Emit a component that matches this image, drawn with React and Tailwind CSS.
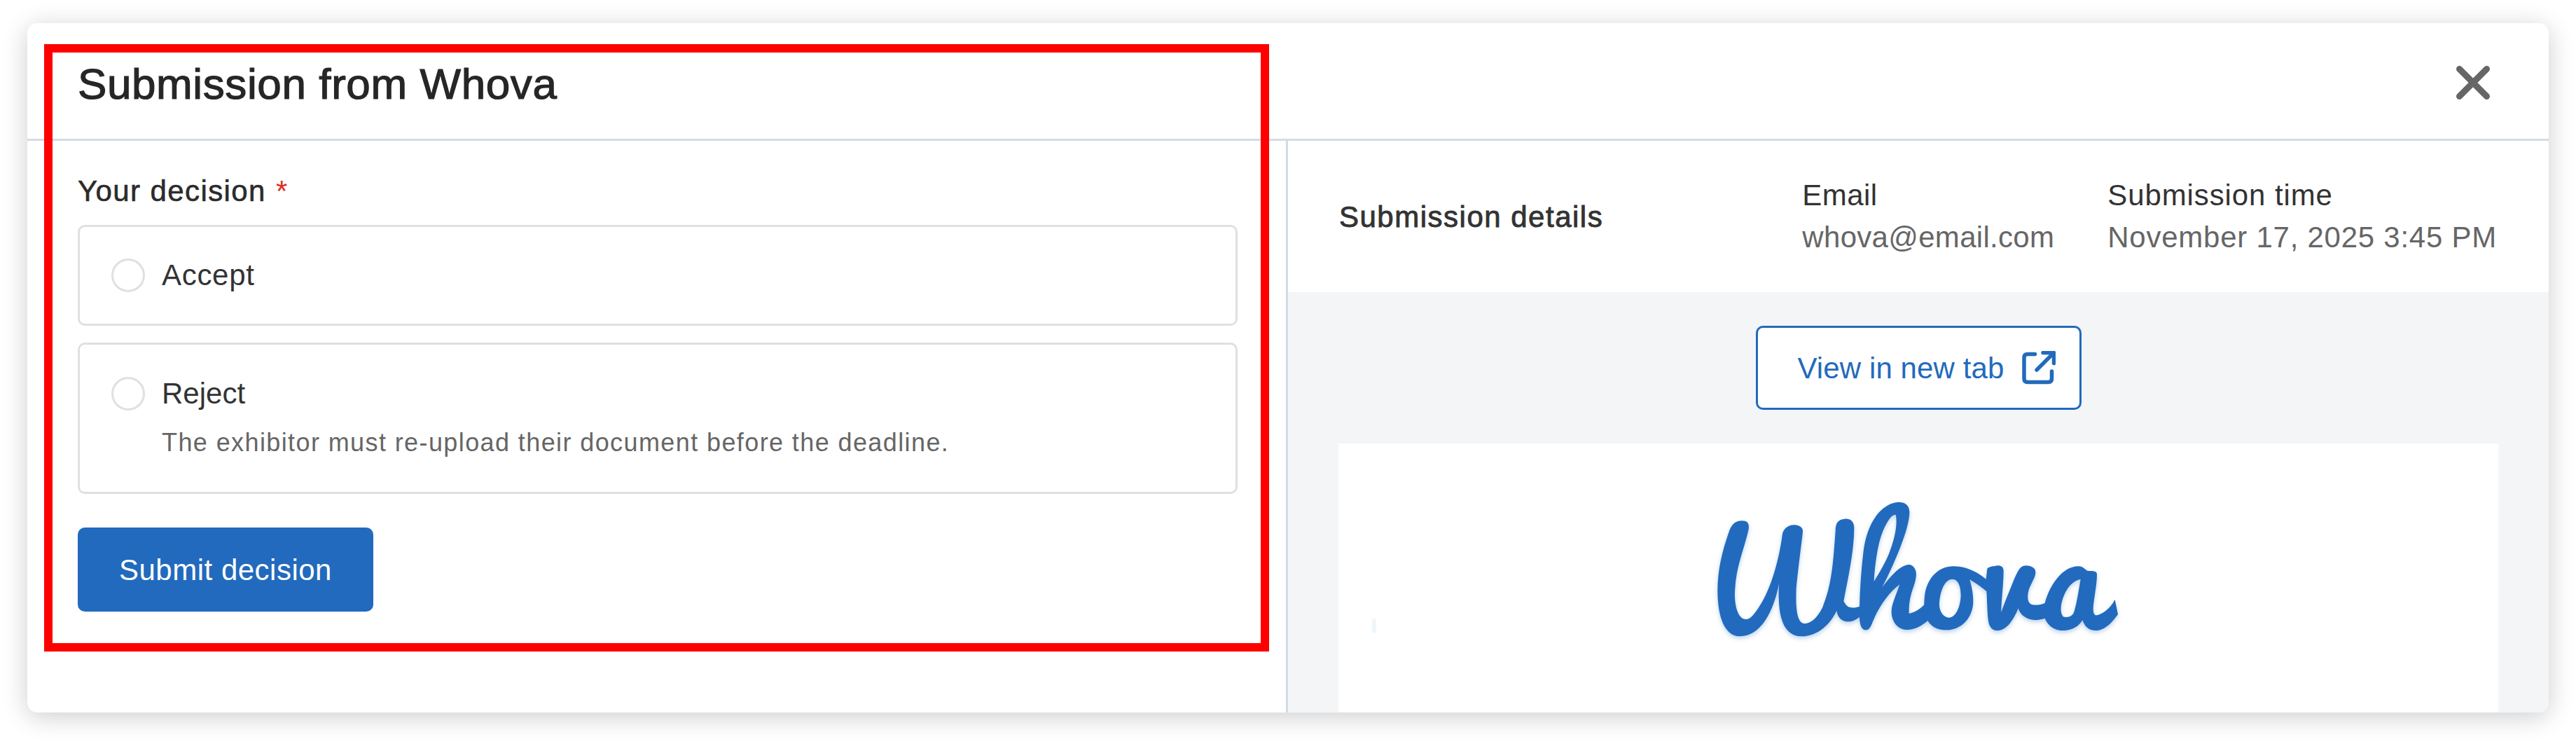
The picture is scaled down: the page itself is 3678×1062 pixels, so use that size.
import React from 'react'

const LOGO_PATH =
  'M145 130C115 130 100 145 88 180C60 260 40 340 40 430C40 540 70 625 135 625C225 625 280 520 303 400C298 500 305 625 400 625C470 625 525 570 550 515C555 548 575 562 600 562C620 562 635 552 648 542C648 570 655 598 675 598C695 598 700 570 712 545C735 495 775 435 820 403C800 460 785 490 785 520C785 565 815 597 850 597C885 597 915 580 940 558C960 590 990 598 1020 598C1090 598 1135 540 1135 475C1135 440 1128 410 1120 382C1145 395 1170 415 1192 432C1195 480 1195 530 1200 560C1205 590 1220 600 1240 600C1280 600 1310 550 1328 505C1340 545 1380 555 1400 555C1420 555 1440 548 1442 548C1460 590 1495 600 1520 600C1560 600 1590 580 1603 555C1615 590 1635 600 1660 600C1700 600 1735 560 1755 530L1742 468C1720 510 1680 535 1660 535C1648 530 1648 510 1650 490C1660 420 1665 390 1665 360C1665 345 1650 345 1630 345C1615 345 1610 325 1585 325C1520 325 1465 400 1442 482C1430 490 1400 492 1390 490C1365 485 1365 450 1375 420C1390 385 1402 370 1402 350C1402 330 1380 322 1360 322C1335 322 1325 350 1315 370C1290 430 1270 480 1255 522C1255 480 1265 400 1265 345C1265 325 1250 322 1240 322C1225 325 1205 325 1195 335L1190 380C1140 340 1095 325 1050 325C990 325 940 370 928 445C925 465 925 480 925 490C905 510 880 525 860 527C860 500 860 470 875 425C890 385 892 365 890 350C885 325 870 318 860 318C820 320 780 370 745 415C790 330 865 160 862 90C860 60 840 50 815 50C740 55 680 140 665 260C655 340 650 420 648 497C625 505 600 505 590 490L580 475C600 370 625 260 625 160C625 130 605 120 585 122C555 125 545 140 545 175C535 310 530 400 490 500C460 560 430 570 410 570C375 565 375 480 377 420C385 330 405 190 405 175C405 155 385 148 365 148C335 150 322 170 318 185C305 290 270 420 220 495C195 535 180 552 160 552C120 550 110 470 115 420C120 330 150 260 170 180C178 150 175 130 145 130Z' +
  'M710 390C715 300 730 215 750 170C770 125 790 100 803 105C810 130 805 190 780 255C765 300 735 350 710 390Z' +
  'M1045 380C1075 380 1082 420 1082 450C1080 500 1060 545 1030 545C995 540 988 500 990 480C995 425 1015 380 1045 380Z' +
  'M1595 380C1585 440 1575 500 1565 525C1555 545 1530 545 1520 540C1505 520 1510 490 1520 460C1535 415 1565 385 1595 380Z'

function WhovaLogo() {
  return (
    <svg
      width="600"
      height="220"
      viewBox="0 0 1800 660"
      className="shrink-0 drop-shadow-[0_3px_3px_rgba(34,106,189,0.3)]"
    >
      <path d={LOGO_PATH} fill="#226abd" fillRule="evenodd" />
    </svg>
  )
}

function ExternalIcon() {
  return (
    <svg width="48" height="48" viewBox="17 12 48 48" fill="none" stroke="#226abd" strokeWidth="5.5" strokeLinecap="round" strokeLinejoin="round" className="shrink-0">
      <path d="M35.5 16.5H25Q20 16.5 20 21.5V51.5Q20 56.5 25 56.5H54.5Q59.5 56.5 59.5 51.5V41" />
      <path d="M38 39L62 15" />
      <path d="M47 14.5H62.5V29.5" />
    </svg>
  )
}

function CloseIcon() {
  return (
    <svg width="48" height="48" viewBox="0 0 48 48" fill="none" stroke="#666666" strokeWidth="9" strokeLinecap="round" className="shrink-0">
      <path d="M4.5 4.5L43.5 43.5M43.5 4.5L4.5 43.5" />
    </svg>
  )
}

function Radio() {
  return <span className="w-12 h-12 rounded-full border-3 border-[#e0e0e0] bg-white shrink-0" />
}

export default function App() {
  return (
    <div className="w-full h-[1062px] bg-white pt-[33px] pl-[39px] overflow-hidden font-['Liberation_Sans',Arial,sans-serif]">
      <div className="relative w-[3600px] h-[984px] bg-white rounded-[14px] shadow-[0_6px_36px_rgba(0,0,0,0.2)]">
        <div className="w-full h-full rounded-[14px] overflow-hidden flex flex-col">
          {/* Header */}
          <div className="h-[168px] shrink-0 border-b-3 border-[#d3dbe5] flex justify-between pl-[72px] pr-[84px]">
            <h1 className="mt-[52px] h-[70px] text-[62px] leading-[70px] tracking-[0.6px] text-[#262626] [-webkit-text-stroke:1.2px_#262626]">Submission from Whova</h1>
            <button className="mt-[61px] h-12">
              <CloseIcon />
            </button>
          </div>

          {/* Body */}
          <div className="flex flex-1 min-h-0">
            {/* Decision form */}
            <div className="w-[1800px] shrink-0 border-r-3 border-[#d3dbe5] pl-[72px] pr-[69px] pt-[42px]">
              <div className="h-[60px] text-[42px] leading-[60px] tracking-[1.4px] text-[#2b2b2b] [-webkit-text-stroke:0.6px_#2b2b2b]">
                Your decision <span className="ml-px text-[#d93025] [-webkit-text-stroke:0]">*</span>
              </div>

              <div className="mt-[18px] h-[144px] rounded-[10px] border-3 border-[#e0e0e0] pl-[45px] flex items-center gap-6">
                <Radio />
                <span className="text-[42px] leading-[48px] tracking-[0.7px] text-[#333333]">Accept</span>
              </div>

              <div className="mt-6 h-[216px] rounded-[10px] border-3 border-[#e0e0e0] pl-[45px] pt-[46px]">
                <div className="flex items-center gap-6 h-12">
                  <Radio />
                  <span className="text-[42px] leading-[48px] text-[#333333]">Reject</span>
                </div>
                <p className="mt-5 ml-[72px] text-[36px] leading-[52px] tracking-[1.4px] text-[#666666]">
                  The exhibitor must re-upload their document before the deadline.
                </p>
              </div>

              <button className="mt-12 w-[422px] h-[120px] rounded-[10px] bg-[#226abd] text-white text-[42px] tracking-[0.5px]">
                Submit decision
              </button>
            </div>

            {/* Submission details */}
            <div className="flex-1 min-w-0 flex flex-col">
              <div className="h-[216px] shrink-0 flex items-center pl-[73px] pr-[74px]">
                <div className="flex-1 text-[42px] tracking-[1.5px] text-[#333333] [-webkit-text-stroke:0.9px_#333333]">Submission details</div>
                <div className="flex gap-[76px]">
                  <div>
                    <div className="text-[42px] leading-[60px] tracking-[0.4px] text-[#333333]">Email</div>
                    <div className="text-[42px] leading-[60px] tracking-[0.3px] text-[#666666]">whova@email.com</div>
                  </div>
                  <div>
                    <div className="text-[42px] leading-[60px] tracking-[0.9px] text-[#333333]">Submission time</div>
                    <div className="text-[42px] leading-[60px] tracking-[0.75px] text-[#666666]">November 17, 2025 3:45 PM</div>
                  </div>
                </div>
              </div>

              <div className="flex-1 min-h-0 bg-[#f4f5f7] flex flex-col items-center pt-12">
                <button className="w-[465px] h-[120px] shrink-0 rounded-[10px] border-3 border-[#226abd] bg-white flex items-center pl-[57px] gap-[26px] text-[42px] tracking-[0.1px] text-[#226abd]">
                  View in new tab
                  <ExternalIcon />
                </button>
                <div className="relative mt-12 w-[1656px] flex-1 bg-white flex justify-center pt-[67px]">
                  <WhovaLogo />
                  <span className="absolute left-[48px] top-[250px] w-[6px] h-5 bg-[#eef6fb]" />
                </div>
              </div>
            </div>
          </div>
        </div>

        {/* Annotation frame */}
        <div className="absolute left-6 top-[30px] w-[1749px] h-[867px] border-12 border-[#ff0000] pointer-events-none" />
      </div>
    </div>
  )
}
